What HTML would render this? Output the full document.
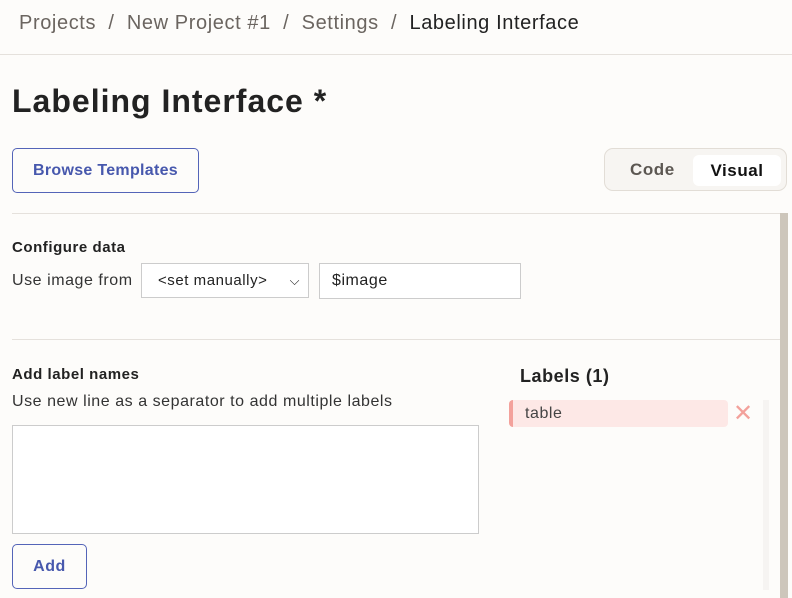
<!DOCTYPE html>
<html><head><style>
*{box-sizing:border-box;margin:0;padding:0}
body{width:792px;height:598px;overflow:hidden;background:#fdfcfa;font-family:"Liberation Sans",sans-serif;color:#222;position:relative;letter-spacing:0.55px}
.a{position:absolute;white-space:nowrap}
</style></head><body>
<div class="a" style="left:19px;top:12px;font-size:20px;letter-spacing:0.6px;color:#6b6560">Projects &nbsp;/ &nbsp;New Project #1 &nbsp;/ &nbsp;Settings &nbsp;/ &nbsp;<span style="color:#222">Labeling Interface</span></div>
<div class="a" style="left:0;top:54px;width:792px;height:1px;background:#e5e1dc"></div>
<div class="a" style="left:12px;top:83px;font-size:32px;font-weight:bold;color:#222;letter-spacing:1px">Labeling Interface *</div>
<div class="a" style="left:12px;top:148px;width:187px;height:45px;border:1px solid #5464b8;border-radius:5px;color:#4758ad;font-size:16px;font-weight:bold;text-align:center;line-height:43px;letter-spacing:0.3px">Browse Templates</div>
<div class="a" style="left:604px;top:148px;width:183px;height:43px;border:1px solid #e2ddd6;border-radius:9px;background:#f7f5f2"></div>
<div class="a" style="left:630px;top:160px;font-size:17px;font-weight:bold;color:#5c5752">Code</div>
<div class="a" style="left:693px;top:155px;width:88px;height:31px;background:#fff;border-radius:6px;font-size:17px;font-weight:bold;text-align:center;line-height:31px;color:#111">Visual</div>
<div class="a" style="left:12px;top:213px;width:768px;height:1px;background:#e5e1dc"></div>
<div class="a" style="left:780px;top:213px;width:8px;height:385px;background:#cdc6bb"></div>
<div class="a" style="left:12px;top:239px;font-size:15px;font-weight:bold">Configure data</div>
<div class="a" style="left:12px;top:272px;font-size:16px;color:#333">Use image from</div>
<div class="a" style="left:141px;top:263px;width:168px;height:35px;border:1px solid #ccc;background:#fff;font-size:15px;line-height:33px;padding-left:16px">&lt;set manually&gt;<span style="position:absolute;right:8px;top:0;font-size:13px">&#9013;</span></div>
<div class="a" style="left:319px;top:263px;width:202px;height:36px;border:1px solid #ccc;background:#fff;font-size:16px;line-height:34px;padding-left:12px">$image</div>
<div class="a" style="left:12px;top:339px;width:768px;height:1px;background:#e5e1dc"></div>
<div class="a" style="left:12px;top:366px;font-size:15px;font-weight:bold">Add label names</div>
<div class="a" style="left:12px;top:393px;font-size:16px;color:#333">Use new line as a separator to add multiple labels</div>
<div class="a" style="left:12px;top:425px;width:467px;height:109px;border:1px solid #ccc;background:#fff"></div>
<div class="a" style="left:12px;top:544px;width:75px;height:45px;border:1px solid #5464b8;border-radius:5px;color:#4758ad;font-size:16px;font-weight:bold;text-align:center;line-height:43px">Add</div>
<div class="a" style="left:520px;top:366px;font-size:18px;font-weight:bold">Labels (1)</div>
<div class="a" style="left:509px;top:400px;width:219px;height:27px;background:#fde8e6;border-left:4px solid #f3a19b;border-radius:4px;font-size:16px;color:#444;line-height:28px;padding-left:12px">table</div>
<div class="a" style="left:733px;top:400px;font-size:24px;color:#f3a19b;line-height:28px">✕</div>
<div class="a" style="left:763px;top:400px;width:6px;height:190px;background:#f6f4f2"></div>
</body></html>
